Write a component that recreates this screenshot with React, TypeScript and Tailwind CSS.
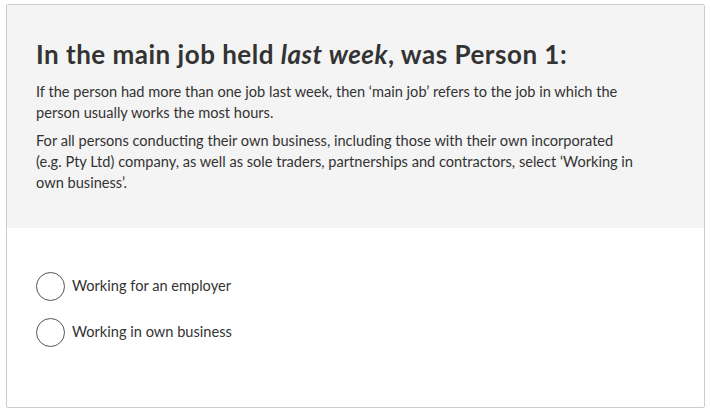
import React from "react";

function Radio({ label }: { label: string }) {
  return (
    <label className="flex items-center gap-[7px] h-[30px]">
      <span className="w-[29px] h-[29px] rounded-full border border-[#555] bg-white shrink-0" />
      <span className="text-[14.6px] text-[#333]">{label}</span>
    </label>
  );
}

export default function App() {
  return (
    <div className="w-[710px] h-[410px] bg-white pt-[4px] pl-[6px]" style={{ fontFamily: "Lato, 'Open Sans', sans-serif" }}>
      <div className="w-[699px] h-[404px] border border-[#cccccc] rounded-[2px] flex flex-col bg-white">
        <div className="bg-[#f4f4f4] h-[223px] px-[29px] pt-[33px]">
          <h1 className="text-[26px] leading-[32px] font-bold text-[#333] tracking-[0.5px]">
            In the main job held <em className="italic">last week</em>, was Person 1:
          </h1>
          <p className="mt-[11px] text-[14.6px] leading-[21px] text-[#333] w-[600px]">
            If the person had more than one job last week, then ‘main job’ refers to the job in which the person usually works the most hours.
          </p>
          <p className="mt-[7px] text-[14.6px] leading-[21px] text-[#333] w-[600px]">
            For all persons conducting their own business, including those with their own incorporated (e.g. Pty Ltd) company, as well as sole traders, partnerships and contractors, select ‘Working in own business’.
          </p>
        </div>
        <div className="px-[29px] pt-[43px] flex flex-col gap-[16px]">
          <Radio label="Working for an employer" />
          <Radio label="Working in own business" />
        </div>
      </div>
    </div>
  );
}
